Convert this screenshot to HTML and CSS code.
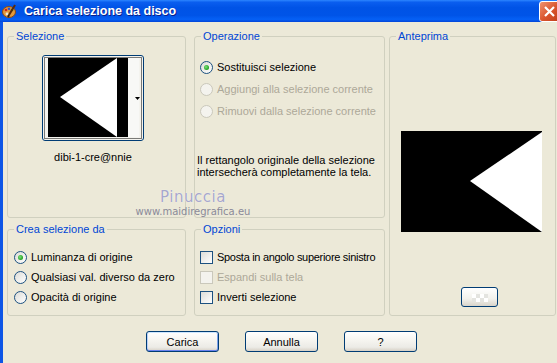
FILE: index.html
```html
<!DOCTYPE html>
<html>
  <head>
    <title>Carica selezione da disco</title>
    <link rel="stylesheet" href="styles.css">
  </head>
  <body>
    <div class="window">
      <div class="titlebar">
        <svg class="title-icon" width="15" height="15" viewBox="0 0 15 15">
          <ellipse cx="7" cy="8" rx="6.5" ry="5.5" fill="#E39A3C" stroke="#8A4A14" stroke-width="1"/>
          <circle cx="4" cy="6" r="1.3" fill="#D02020"/>
          <circle cx="7" cy="4.8" r="1.3" fill="#2050E0"/>
          <circle cx="10" cy="6" r="1.3" fill="#20A020"/>
          <circle cx="5" cy="10" r="1.4" fill="#ECE9D8"/>
          <path d="M13 1 L7 11" stroke="#5A2A0A" stroke-width="2"/>
          <path d="M7 11 L6 13" stroke="#222" stroke-width="2"/>
        </svg>
        <span class="title">Carica selezione da disco</span>
        <div class="close">
          <svg width="21" height="21" viewBox="0 0 21 21">
            <path d="M6 6 L15 15 M15 6 L6 15" stroke="#fff" stroke-width="2.2"/>
          </svg>
        </div>
      </div>

      <div class="body">
        <div class="groups">
          <div class="col col-left">
            <fieldset class="group top">
              <legend>Selezione</legend>
              <button class="thumb">
                <svg width="100" height="84" viewBox="0 0 100 84">
                  <rect x="5" y="2" width="80" height="79" fill="#000"/>
                  <polygon points="17,41 74,2 74,81" fill="#fff"/>
                  <rect x="85" y="2" width="11" height="79" fill="#F8F8F6"/>
                  <polygon points="92,41 97,41 94.5,44" fill="#000"/>
                  <rect x="1.5" y="1.5" width="97" height="81" fill="none" stroke="#000" stroke-dasharray="1 1"/>
                </svg>
              </button>
              <div class="thumb-name">dibi-1-cre@nnie</div>
            </fieldset>

            <fieldset class="group bottom">
              <legend>Crea selezione da</legend>
              <div class="options crea">
                <div class="opt"><span class="radio on"></span>Luminanza di origine</div>
                <div class="opt"><span class="radio"></span>Qualsiasi val. diverso da zero</div>
                <div class="opt"><span class="radio"></span>Opacità di origine</div>
              </div>
            </fieldset>
          </div>

          <div class="col col-mid">
            <fieldset class="group top">
              <legend>Operazione</legend>
              <div class="options op">
                <div class="opt"><span class="radio on"></span>Sostituisci selezione</div>
                <div class="opt off"><span class="radio"></span>Aggiungi alla selezione corrente</div>
                <div class="opt off"><span class="radio"></span>Rimuovi dalla selezione corrente</div>
              </div>
              <p class="note">Il rettangolo originale della selezione<br>intersecherà completamente la tela.</p>
            </fieldset>

            <fieldset class="group bottom">
              <legend>Opzioni</legend>
              <div class="options opz">
                <div class="opt tight"><span class="check"></span>Sposta in angolo superiore sinistro</div>
                <div class="opt off"><span class="check"></span>Espandi sulla tela</div>
                <div class="opt"><span class="check"></span>Inverti selezione</div>
              </div>
            </fieldset>
          </div>

          <fieldset class="group preview">
            <legend>Anteprima</legend>
            <svg class="preview-img" width="141" height="101" viewBox="0 0 141 101">
              <rect width="141" height="101" fill="#000"/>
              <polygon points="69,50 141,1 141,101" fill="#fff"/>
            </svg>
            <button class="preview-btn">
              <svg width="20" height="10" viewBox="0 0 20 10">
                <rect x="2" y="0" width="4" height="4" fill="#fff"/>
                <rect x="10" y="0" width="4" height="4" fill="#fff"/>
                <rect x="6" y="4" width="4" height="4" fill="#fff"/>
                <rect x="14" y="4" width="4" height="4" fill="#fff"/>
                <rect x="6" y="0" width="4" height="4" fill="#E4E4E0"/>
                <rect x="14" y="0" width="4" height="4" fill="#E4E4E0"/>
                <rect x="2" y="4" width="4" height="4" fill="#E4E4E0"/>
                <rect x="10" y="4" width="4" height="4" fill="#E4E4E0"/>
              </svg>
            </button>
          </fieldset>
        </div>

        <div class="buttons">
          <button class="btn default">Carica</button>
          <button class="btn">Annulla</button>
          <button class="btn">?</button>
        </div>

        <div class="watermark">
          <div class="wm-name">Pinuccia</div>
          <div class="wm-site">www.maidiregrafica.eu</div>
        </div>
      </div>
    </div>
  </body>
</html>
```

FILE: styles.css
```css
body {
  margin: 0;
  font-family: "Liberation Sans", Arial, sans-serif;
  font-size: 11px;
  background-color: #ECE9D8;
}

.window {
  width: 557px;
  height: 363px;
  overflow: hidden;
}

.titlebar {
  height: 22px;
  display: flex;
  align-items: center;
  color: white;
  background: linear-gradient(to bottom, #2C86FF 0%, #0A5EEF 10%, #0053E6 35%, #0054E8 70%, #0560F5 88%, #0345D8 100%);
}

.title-icon {
  margin-left: 2px;
  flex-shrink: 0;
}

.title {
  margin-left: 7px;
  font-weight: bold;
  font-size: 12.5px;
  text-shadow: 1px 1px #0A1E8A;
}

.close {
  margin-left: auto;
  margin-right: -3px;
  width: 21px;
  height: 21px;
  flex-shrink: 0;
  box-sizing: border-box;
  border: 1px solid #fff;
  border-radius: 3px;
  background: linear-gradient(135deg, #F0936E, #D9532C 55%, #C0401C);
}

.close svg {
  display: block;
  margin: -1px;
}

.body {
  position: relative;
  height: 341px;
  box-sizing: border-box;
  border-left: 3px solid #0D55E6;
  padding: 8px 0 0 4px;
}

.groups {
  display: flex;
}

.col {
  display: flex;
  flex-direction: column;
}

.col-left {
  width: 179px;
  margin-right: 8px;
}

.col-mid {
  width: 191px;
  margin-right: 4px;
}

.group {
  margin: 0;
  padding: 0;
  min-width: 0;
  box-sizing: border-box;
  border: 1px solid #D0D0BF;
  border-radius: 3px;
}

.group legend {
  padding: 0 2px;
  margin-left: 6px;
  line-height: 13px;
  color: #0046D5;
}

.top {
  height: 188px;
}

.bottom {
  height: 93px;
  margin-top: 5px;
}

.preview {
  width: 167px;
  height: 286px;
}

/* thumbnail of the saved selection */
.thumb {
  display: block;
  width: 102px;
  height: 86px;
  margin: 12px 0 0 34px;
  padding: 0;
  border: 1px solid #003C74;
  border-radius: 3px;
  background-color: #F4F3EE;
}

.thumb svg {
  display: block;
}

.thumb-name {
  width: 102px;
  margin: 10px 0 0 34px;
  text-align: center;
  line-height: 13px;
}

.options.op {
  padding: 13px 0 0 5px;
}

.options.crea {
  padding: 11px 0 0 6px;
}

.options.opz {
  padding: 11px 0 0 5px;
}

.opt {
  display: flex;
  align-items: center;
  height: 20px;
  white-space: nowrap;
}

.opt.tight {
  letter-spacing: -0.3px;
}

.op .opt {
  height: 22px;
}

.opt.off {
  color: #ACA899;
}

.radio {
  width: 13px;
  height: 13px;
  margin-right: 4px;
  flex-shrink: 0;
  box-sizing: border-box;
  border: 1px solid #1C5180;
  border-radius: 50%;
  background: linear-gradient(135deg, #DCDCD7, #FFFFFF);
  display: flex;
  align-items: center;
  justify-content: center;
}

.radio.on::after {
  content: "";
  width: 5px;
  height: 5px;
  border-radius: 50%;
  background: radial-gradient(circle at 40% 40%, #7CE07C, #21A121 70%);
}

.check {
  width: 13px;
  height: 13px;
  margin-right: 4px;
  flex-shrink: 0;
  box-sizing: border-box;
  border: 1px solid #1C5180;
  background: linear-gradient(135deg, #DCDCD7, #FFFFFF);
}

.off .radio,
.off .check {
  border-color: #CAC8BB;
  background: #F4F3EE;
}

.note {
  margin: 32px 0 0 2px;
  line-height: 12px;
}

.preview-img {
  display: block;
  margin: 88px 0 0 11px;
}

.preview-btn {
  display: block;
  width: 37px;
  height: 20px;
  margin: 55px 0 0 71px;
  padding: 0;
  border: 1px solid #003C74;
  border-radius: 3px;
  background: linear-gradient(to bottom, #FFFFFF, #F2F1EC 60%, #D8D4CA);
}

.preview-btn svg {
  display: block;
  margin: 4px auto 0;
}

.buttons {
  display: flex;
  gap: 26px;
  padding-left: 139px;
  margin-top: 15px;
}

.btn {
  width: 73px;
  height: 21px;
  padding: 0;
  font-family: inherit;
  font-size: 11px;
  color: #000;
  border: 1px solid #003C74;
  border-radius: 3px;
  background: linear-gradient(to bottom, #FFFFFF, #F4F3EE 50%, #ECEBE6 80%, #D6D0C5);
}

.btn.default {
  box-shadow: inset 0 1px #CEE7FF, inset 0 -1px #6982EE, inset 1px 0 #B9D1FA, inset -1px 0 #7BA0E8;
}

/* watermark stamped on the screenshot */
.watermark {
  position: absolute;
  left: 128px;
  top: 166px;
  width: 124px;
  text-align: center;
}

.wm-name {
  font-family: "DejaVu Sans", sans-serif;
  font-size: 15px;
  line-height: 18px;
  letter-spacing: 0.5px;
  color: #A7A7CB;
  text-shadow: 0 0 1px #fff;
}

.wm-site {
  font-family: "DejaVu Sans", sans-serif;
  font-size: 10px;
  line-height: 11px;
  color: #8A8A98;
}
```
